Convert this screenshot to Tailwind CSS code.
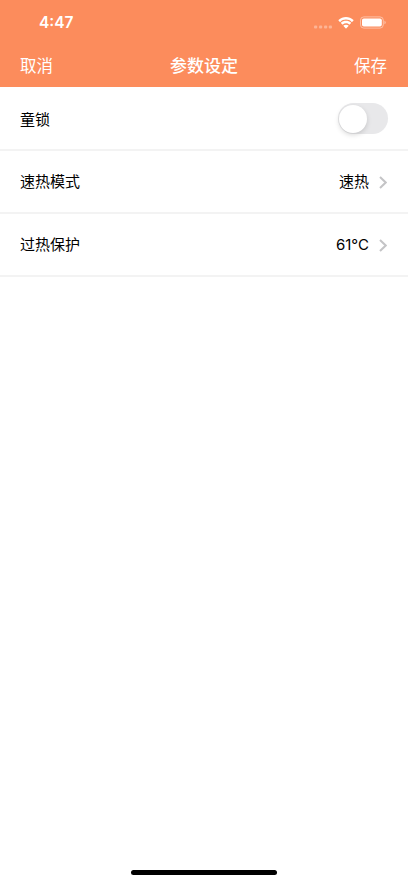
<!DOCTYPE html>
<html lang="zh-CN">
<head>
    <meta charset="UTF-8">
    <meta name="viewport" content="width=device-width, initial-scale=1.0">
    <title>参数设定</title>
    <script src="https://cdn.jsdelivr.net/npm/@tailwindcss/browser@4"></script>
</head>
<body class="bg-white font-[Inter,'Noto_Sans_CJK_SC',sans-serif] text-black">
  <div class="flex h-[883px] w-[408px] flex-col overflow-hidden">
    <header class="h-[87px] bg-[#fc8c5c] text-white">
      <!-- status bar -->
      <div class="flex h-[45px] items-center justify-between pl-[39px] pr-[22px]">
        <span class="text-[15.5px] font-semibold leading-none">4:47</span>
        <div class="flex items-center">
          <svg class="mt-2 h-[4px] w-[18px] text-white/35" viewBox="0 0 18 4" fill="currentColor" aria-hidden="true">
            <rect x="0" y="0.5" width="3.2" height="3" rx="1"/>
            <rect x="5" y="0.5" width="3.2" height="3" rx="1"/>
            <rect x="10" y="0.5" width="3.2" height="3" rx="1"/>
            <rect x="14.8" y="0.5" width="3.2" height="3" rx="1"/>
          </svg>
          <svg class="ml-1.5 h-[12px] w-[16px]" viewBox="0 0 16 12" fill="currentColor" aria-hidden="true">
            <path d="M8 2.600c2.200 0 4.200.8 5.700 2.300.1.100.3.100.4 0l1.400-1.400c.1-.1.1-.3 0-.5-4.200-4-10.800-4-15 0-.1.200-.1.400 0 .5l1.400 1.400c.1.100.3.100.4 0C3.800 3.400 5.800 2.600 8 2.600Z"/>
            <path d="M8 6.300c1.200 0 2.300.5 3.200 1.300.1.100.3.100.5 0l1.400-1.500c.1-.1.1-.3 0-.4-2.900-2.600-7.300-2.600-10.200 0-.1.100-.1.300 0 .4l1.400 1.500c.2.100.4.100.5 0C5.700 6.800 6.800 6.300 8 6.300Z"/>
            <path d="M10.500 9c.1-.1.1-.3 0-.4-1.500-1.200-3.500-1.200-5 0-.1.100-.1.300 0 .4l2.300 2.400c.1.100.3.100.4 0L10.500 9Z"/>
          </svg>
          <svg class="ml-[6px] h-[13px] w-[26px]" viewBox="0 0 26 13" aria-hidden="true">
            <rect x="0.5" y="0.9" width="22.8" height="11.2" rx="3.3" fill="none" stroke="white" stroke-opacity=".45"/>
            <rect x="2" y="2.4" width="19.8" height="8.2" rx="1.8" fill="white"/>
            <path d="M24.500 4.700v3.600c.7-.3 1.200-1 1.200-1.800s-.5-1.500-1.200-1.800Z" fill="white" fill-opacity=".5"/>
          </svg>
        </div>
      </div>
      <nav class="grid h-[42px] grid-cols-3 items-center px-5 text-[16.5px] leading-none">
        <button class="text-left">取消</button>
        <h1 class="text-center text-[17px] font-medium">参数设定</h1>
        <button class="pr-px text-right">保存</button>
      </nav>
    </header>

    <main class="text-[15px]">
      <div class="flex h-16 items-center justify-between border-b-2 border-[#f3f3f3] px-5 pt-1">
        <span>童锁</span>
        <button role="switch" aria-checked="false" aria-label="童锁" class="mb-[3px] flex h-[31px] w-[50px] items-center rounded-full bg-[#e8e8ea] p-px">
          <span class="size-[28px] rounded-full bg-white shadow-[0_2px_5px_rgba(0,0,0,0.15)]"></span>
        </button>
      </div>
      <div class="flex h-[63px] items-center justify-between border-b-2 border-[#f3f3f3] px-5 pt-px">
        <span class="pt-px">速热模式</span>
        <div class="flex items-center gap-2.5">
          <span class="pt-px">速热</span>
          <svg class="mr-[1px] h-[13px] w-[8px] text-[#c4c4c6]" viewBox="0 0 8 13" fill="none" stroke="currentColor" stroke-width="2" aria-hidden="true">
            <path d="M1 1l5.700 5.500L1 12"/>
          </svg>
        </div>
      </div>
      <div class="flex h-[63px] items-center justify-between border-b-2 border-[#f3f3f3] px-5 pt-px">
        <span class="pt-px">过热保护</span>
        <div class="flex items-center gap-2.5">
          <span class="pt-px">61°C</span>
          <svg class="mr-[1px] h-[13px] w-[8px] text-[#c4c4c6]" viewBox="0 0 8 13" fill="none" stroke="currentColor" stroke-width="2" aria-hidden="true">
            <path d="M1 1l5.700 5.500L1 12"/>
          </svg>
        </div>
      </div>
    </main>

    <!-- home indicator -->
    <div class="mx-auto mb-[8px] mt-auto h-[5px] w-[146px] rounded-full bg-black"></div>
  </div>
</body>
</html>
